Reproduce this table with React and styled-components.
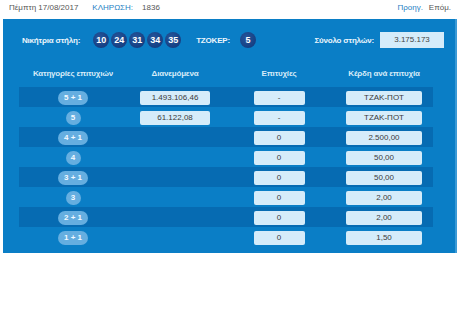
import React from "react";
import styled, { createGlobalStyle } from "styled-components";

const results = [
	{ cat: "5 + 1", shared: "1.493.106,46", wins: "-", prize: "ΤΖΑΚ-ΠΟΤ" },
	{ cat: "5", shared: "61.122,08", wins: "-", prize: "ΤΖΑΚ-ΠΟΤ" },
	{ cat: "4 + 1", wins: "0", prize: "2.500,00" },
	{ cat: "4", wins: "0", prize: "50,00" },
	{ cat: "3 + 1", wins: "0", prize: "50,00" },
	{ cat: "3", wins: "0", prize: "2,00" },
	{ cat: "2 + 1", wins: "0", prize: "2,00" },
	{ cat: "1 + 1", wins: "0", prize: "1,50" },
];

const numbers = [10, 24, 31, 34, 35];

export default function App() {
	return (
		<>
			<GlobalStyle />
			<TopBar>
				<Info>
					<span>Πέμπτη 17/08/2017</span>
					<Draw>
						<BlueText>ΚΛΗΡΩΣΗ:</BlueText>
						<span>1836</span>
					</Draw>
				</Info>
				<Nav>
					<BlueText>Προηγ.</BlueText>
					<span>Επόμ.</span>
				</Nav>
			</TopBar>

			<Panel>
				<WinRow>
					<Label>Νικήτρια στήλη:</Label>
					<Balls>
						{numbers.map((n) => (
							<Ball key={n}>{n}</Ball>
						))}
					</Balls>
					<Label $gap={15}>ΤΖΟΚΕΡ:</Label>
					<Ball $gap={10}>5</Ball>
					<Total>
						<Label>Σύνολο στηλών:</Label>
						<TotalBox>3.175.173</TotalBox>
					</Total>
				</WinRow>

				<HeadRow>
					<Head>Κατηγορίες επιτυχιών</Head>
					<Head>Διανεμόμενα</Head>
					<Head>Επιτυχίες</Head>
					<Head>Κέρδη ανά επιτυχία</Head>
				</HeadRow>

				<Table>
					{results.map((r, i) => (
						<Row key={r.cat} $dark={i % 2 === 0}>
							<Cell>
								<Pill $round={r.cat.length === 1}>{r.cat}</Pill>
							</Cell>
							<Cell>{r.shared && <Box $w={70}>{r.shared}</Box>}</Cell>
							<Cell>
								<Box $w={51}>{r.wins}</Box>
							</Cell>
							<Cell>
								<Box $w={76}>{r.prize}</Box>
							</Cell>
						</Row>
					))}
				</Table>
			</Panel>
		</>
	);
}

const GlobalStyle = createGlobalStyle`
	body {
		margin: 0;
		background: #fff;
		font-family: "Liberation Sans", Arial, sans-serif;
	}
`;

const TopBar = styled.div`
	display: flex;
	justify-content: space-between;
	align-items: center;
	height: 15px;
	padding: 0 8px 4px 9px;
	font-size: 8px;
	color: #555;
`;

const Info = styled.div`
	display: flex;
	gap: 14px;
`;

const Draw = styled.div`
	display: flex;
	gap: 9px;
`;

const Nav = styled.div`
	display: flex;
	gap: 6px;
`;

const BlueText = styled.span`
	color: #1f7fc4;
`;

const Panel = styled.div`
	width: 452px;
	margin-left: 3px;
	padding: 13px 0 6px;
	background: #0a7ec6;
	border-right: 2px solid #3b9ad6;
`;

const WinRow = styled.div`
	display: flex;
	align-items: center;
	height: 16px;
	padding: 0 11px 0 19px;
`;

const Label = styled.span`
	margin-left: ${(p) => p.$gap || 0}px;
	font-size: 8px;
	font-weight: bold;
	color: #eaf5fc;
	letter-spacing: -0.2px;
	white-space: nowrap;
`;

const Balls = styled.div`
	display: flex;
	gap: 2px;
	margin-left: 13px;
`;

const Ball = styled.div`
	display: flex;
	align-items: center;
	justify-content: center;
	width: 16px;
	height: 16px;
	margin-left: ${(p) => p.$gap || 0}px;
	border-radius: 50%;
	background: radial-gradient(circle at 40% 35%, #25569c, #0f3678);
	color: #fff;
	font-size: 9px;
	font-weight: bold;
`;

const Total = styled.div`
	display: flex;
	align-items: center;
	gap: 6px;
	margin-left: auto;
`;

const TotalBox = styled.div`
	width: 64px;
	height: 16px;
	line-height: 16px;
	text-align: center;
	background: #d5ecfa;
	color: #444;
	font-size: 8px;
`;

const HeadRow = styled.div`
	display: grid;
	grid-template-columns: 108px 96px 112px 98px;
	align-items: center;
	height: 20px;
	margin: 15px 0 4px 16px;
`;

const Head = styled.div`
	text-align: center;
	font-size: 8px;
	font-weight: bold;
	color: #d6ebf8;
	letter-spacing: -0.2px;
`;

const Table = styled.div`
	display: flex;
	flex-direction: column;
	margin-left: 16px;
	width: 414px;
`;

const Row = styled.div`
	display: grid;
	grid-template-columns: 108px 96px 112px 98px;
	height: 20px;
	background: ${(p) => (p.$dark ? "#066bb2" : "transparent")};
`;

const Cell = styled.div`
	display: flex;
	align-items: center;
	justify-content: center;
	padding-top: 1px;
`;

const Pill = styled.div`
	min-width: 15px;
	height: 14px;
	line-height: 14px;
	padding: ${(p) => (p.$round ? "0" : "0 6px")};
	box-sizing: border-box;
	border-radius: 7px;
	background: #65aee0;
	color: #f4faff;
	font-size: 8px;
	font-weight: bold;
	text-align: center;
	white-space: nowrap;
`;

const Box = styled.div`
	width: ${(p) => p.$w}px;
	height: 14px;
	line-height: 14px;
	border-radius: 2px;
	background: #d5ecfa;
	color: #3a3a3a;
	font-size: 8px;
	text-align: center;
`;
